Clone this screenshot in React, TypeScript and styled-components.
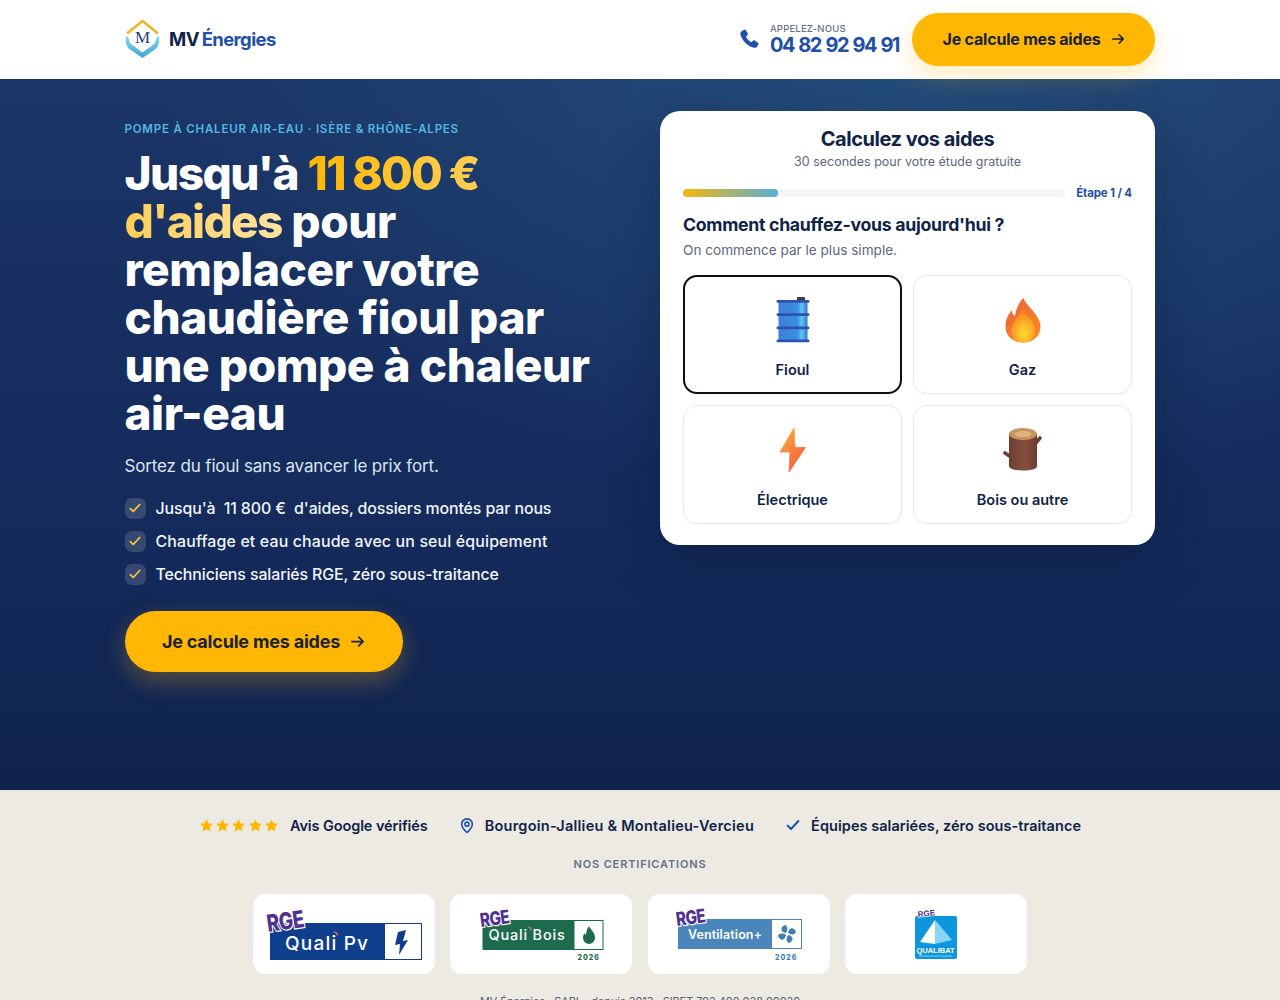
import React from "react";
import styled, { createGlobalStyle } from "styled-components";

const Global = createGlobalStyle`
  html, body { margin: 0; padding: 0; background: #edeae3; }
  * { box-sizing: border-box; }
  body { font-family: Inter, "Noto Sans", sans-serif; color: #0f2348; }
`;

const Page = styled.div`
  width: 1280px;
  height: 1000px;
  overflow: hidden;
`;
const Header = styled.header`
  height: 79px;
  background: #fff;
  padding: 0 125px 1px;
  display: flex;
  align-items: center;
  justify-content: space-between;
`;
const Logo = styled.div`
  display: flex;
  align-items: center;
  gap: 8px;
`;
const LogoText = styled.div`
  font-size: 18.5px;
  font-weight: 700;
  letter-spacing: -0.6px;
  word-spacing: -1px;
  color: #0f2348;
  span { color: #1f4fa8; }
`;
const HeaderRight = styled.div`
  display: flex;
  align-items: center;
  gap: 13px;
`;
const PhoneBlock = styled.div`
  display: flex;
  align-items: center;
  gap: 10px;
`;
const PhoneText = styled.div`
  display: flex;
  flex-direction: column;
  padding-top: 1px;
`;
const PhoneLabel = styled.span`
  font-size: 9.5px;
  font-weight: 500;
  color: #64708a;
  letter-spacing: 0.2px;
  line-height: 11px;
`;
const PhoneNumber = styled.span`
  font-size: 20px;
  font-weight: 700;
  color: #1f4fa8;
  line-height: 22px;
  letter-spacing: -1.5px;
  word-spacing: 1.2px;
`;
const Cta = styled.div<{ $big?: boolean }>`
  display: inline-flex;
  align-items: center;
  justify-content: center;
  gap: 10px;
  width: ${(p) => (p.$big ? "278px" : "243px")};
  height: ${(p) => (p.$big ? "61px" : "53px")};
  border-radius: 999px;
  background: #ffb703;
  color: #1a2238;
  font-weight: 700;
  font-size: ${(p) => (p.$big ? "18px" : "16px")};
  letter-spacing: -0.2px;
  box-shadow: 0 10px 24px rgba(255, 183, 3, ${(p) => (p.$big ? "0.28" : "0.25")});
`;
const Hero = styled.section`
  height: 711px;
  padding: 32px 125px 0 124.5px;
  background:
    radial-gradient(ellipse 760px 420px at 72% 0%, rgba(44, 96, 140, 0.55), rgba(20, 50, 100, 0) 100%),
    linear-gradient(180deg, #1a3566 0%, #142b5c 60%, #10234f 100%);
  display: grid;
  grid-template-columns: 500px 495px;
  justify-content: space-between;
  align-items: start;
  color: #fff;
`;
const HeroLeft = styled.div`
  padding-top: 11px;
`;
const Eyebrow = styled.div`
  font-size: 11.5px;
  font-weight: 600;
  letter-spacing: 0.8px;
  color: #55b6e3;
  line-height: 14px;
`;
const Title = styled.h1`
  margin: 13px 0 0;
  width: 490px;
  font-size: 46px;
  font-weight: 800;
  line-height: 48px;
  letter-spacing: -0.45px;
  color: #fff;
  em {
    font-style: normal;
    letter-spacing: -1.7px;
    word-spacing: -1px;
    color: transparent;
    background: linear-gradient(90deg, #ffb703, #ffe3a0);
    -webkit-background-clip: text;
    background-clip: text;
  }
`;
const TitleLead = styled.span`
  letter-spacing: -1.6px;
`;
const Lead = styled.p`
  margin: 16px 0 0;
  font-size: 17px;
  line-height: 26px;
  color: #dde5f0;
  letter-spacing: -0.15px;
`;
const Checks = styled.ul`
  list-style: none;
  margin: 18px 0 0;
  padding: 0;
  display: flex;
  flex-direction: column;
  gap: 11px;
`;
const CheckRow = styled.li<{ $ls: number }>`
  display: flex;
  align-items: center;
  gap: 10px;
  height: 22px;
  font-size: 15.9px;
  font-weight: 500;
  color: #f2f5fa;
  letter-spacing: ${(p) => p.$ls}px;
  white-space: pre;
`;
const CheckBox = styled.span`
  width: 21px;
  height: 21px;
  border-radius: 7px;
  background: rgba(255, 255, 255, 0.15);
  display: flex;
  align-items: center;
  justify-content: center;
  flex: none;
`;
const HeroCta = styled.div`
  margin-top: 26px;
`;
const Card = styled.div`
  background: #fff;
  border-radius: 20px;
  height: 434px;
  padding: 16px 23px 0;
  box-shadow: 0 20px 50px rgba(5, 15, 45, 0.3);
  color: #0f2348;
`;
const CardTitle = styled.h2`
  margin: 0;
  text-align: center;
  font-size: 20px;
  font-weight: 700;
  line-height: 24px;
  letter-spacing: -0.45px;
`;
const CardSub = styled.div`
  margin-top: 2px;
  text-align: center;
  font-size: 12.5px;
  line-height: 18px;
  color: #5d6880;
`;
const ProgressRow = styled.div`
  margin-top: 15px;
  display: flex;
  align-items: center;
  gap: 11px;
`;
const Track = styled.div`
  flex: 1;
  height: 8px;
  border-radius: 4px;
  background: #f2f4f6;
`;
const Fill = styled.div`
  width: 24.8%;
  height: 100%;
  border-radius: 4px;
  background: linear-gradient(90deg, #f6b60d, #55b0d8);
`;
const Step = styled.span`
  font-size: 11.5px;
  font-weight: 700;
  color: #1f4fa8;
  letter-spacing: -0.15px;
`;
const Question = styled.div`
  margin-top: 13px;
  font-size: 17.7px;
  font-weight: 700;
  line-height: 24px;
  letter-spacing: -0.3px;
`;
const Hint = styled.div`
  margin-top: 3px;
  font-size: 13.6px;
  line-height: 20px;
  color: #5d6880;
`;
const Options = styled.div`
  margin-top: 15px;
  display: grid;
  grid-template-columns: 1fr 1fr;
  gap: 11px;
`;
const Option = styled.div<{ $on?: boolean }>`
  height: 119px;
  border-radius: 14px;
  border: ${(p) => (p.$on ? "2px solid #0c0f16" : "1px solid #e6e8ec")};
  display: flex;
  flex-direction: column;
  align-items: center;
  padding-top: ${(p) => (p.$on ? "20px" : "21px")};
  font-size: 14.5px;
  font-weight: 600;
  color: #0f2348;
  box-shadow: 0 1px 3px rgba(15, 35, 72, 0.04);
`;
const OptionIcon = styled.div`
  height: 48px;
  display: flex;
  align-items: flex-start;
  justify-content: center;
`;
const OptionLabel = styled.span`
  margin-top: 14px;
  line-height: 22px;
`;
const Trust = styled.section`
  background: #edeae3;
  padding-top: 25px;
`;
const TrustRow = styled.div`
  display: flex;
  justify-content: center;
  align-items: center;
  gap: 31px;
  height: 20px;
`;
const TrustItem = styled.div<{ $ls: number }>`
  display: flex;
  align-items: center;
  gap: 10px;
  font-size: 14.5px;
  font-weight: 600;
  color: #0f2348;
  letter-spacing: ${(p) => p.$ls}px;
`;
const Stars = styled.span`
  display: flex;
  gap: 1.25px;
  margin-right: 1px;
`;
const CertLabel = styled.div`
  margin-top: 22px;
  text-align: center;
  font-size: 11px;
  font-weight: 600;
  letter-spacing: 0.85px;
  color: #64708a;
  line-height: 14px;
`;
const Certs = styled.div`
  margin-top: 23px;
  display: flex;
  justify-content: center;
  gap: 15.5px;
`;
const Cert = styled.div`
  width: 182px;
  height: 80px;
  border-radius: 12px;
  background: #fff;
  display: flex;
  align-items: center;
  justify-content: center;
`;
const Legal = styled.div`
  margin-top: 20px;
  text-align: center;
  font-size: 10.9px;
  color: #55606f;
  line-height: 14px;
`;

const Arrow = ({ size }: { size: number }) => (
  <svg width={size} height={size} viewBox="0 0 24 24" fill="none" stroke="currentColor" strokeWidth="2.800" strokeLinecap="round" strokeLinejoin="round">
    <path d="M3 12h18M14 5l7 7-7 7" />
  </svg>
);
const Tick = ({ color = "#ffc53a", size = 14 }: { color?: string; size?: number }) => (
  <svg width={size} height={size} viewBox="0 0 24 24" fill="none" stroke={color} strokeWidth="3" strokeLinecap="round" strokeLinejoin="round">
    <path d="M4 13l5 5L20 6" />
  </svg>
);
const Star = () => (
  <svg width="15" height="15" viewBox="0 0 24 24" fill="#ffb703">
    <path d="M12 1.800l3.100 6.600 7.200.9-5.300 5 1.400 7.200L12 18l-6.400 3.500L7 14.300l-5.300-5 7.200-.9z" />
  </svg>
);
const Phone = () => (
  <svg width="22" height="22" viewBox="0 0 24 24" fill="#1f4fa8">
    <path d="M6.600 1.800c.6-.4 1.400-.2 1.800.4l2.300 3.800c.3.6.2 1.300-.3 1.700L8.600 9.200c1 2.400 3.400 5.200 6.200 6.400l1.500-1.700c.5-.5 1.200-.6 1.800-.2l3.700 2.400c.6.400.8 1.200.4 1.800l-1.200 2.200c-.7 1.100-2 1.800-3.300 1.500C10.500 20.300 3.900 13.200 2.600 6.900c-.3-1.300.3-2.600 1.400-3.400z" />
  </svg>
);
const Pin = () => (
  <svg width="16" height="17" viewBox="0 0 24 24" fill="none" stroke="#1f4fa8" strokeWidth="2.400">
    <path d="M12 22.500c-4-3.600-8-8-8-12.500a8 8 0 0 1 16 0c0 4.500-4 8.900-8 12.500z" />
    <circle cx="12" cy="10" r="3" />
  </svg>
);

const LogoMark = () => (
  <svg width="36" height="40" viewBox="0 0 36 40">
    <defs>
      <linearGradient id="lgHand" x1="0" y1="0" x2="0" y2="1">
        <stop offset="0" stopColor="#8ad6ea" />
        <stop offset="1" stopColor="#3fa4d4" />
      </linearGradient>
    </defs>
    <path d="M2 14.500L17.500 2 33 14.500" fill="none" stroke="#f3b52e" strokeWidth="2.800" strokeLinejoin="round" />
    <path d="M1 17c1.500 0 2.500 1 3 4 .5 2.500 2 4 4 5.500l9.500 7 9.500-7c2-1.500 3.500-3 4-5.500.5-3 1.500-4 3-4 1 6-.5 11-4 13.500L17.500 39 5 30.500C1.500 28 0 23 1 17z" fill="url(#lgHand)" />
    <text x="17.500" y="24" textAnchor="middle" fontFamily="'Liberation Serif', serif" fontSize="17" fill="#1e3f7d">M</text>
  </svg>
);

const Barrel = () => (
  <svg width="34" height="47" viewBox="0 0 34 47">
    <defs>
      <linearGradient id="brl" x1="0" x2="1" y1="0" y2="0">
        <stop offset="0" stopColor="#3f7fd6" />
        <stop offset="0.65" stopColor="#3a8fe0" />
        <stop offset="0.8" stopColor="#5cc6f2" />
        <stop offset="1" stopColor="#3573c8" />
      </linearGradient>
    </defs>
    <rect x="21" y="0" width="8" height="4" rx="1" fill="#333b50" />
    <rect x="2.500" y="4" width="29" height="41" fill="url(#brl)" />
    <rect x="0.500" y="3" width="33" height="2.800" rx="1.400" fill="#2f50ad" />
    <rect x="0.500" y="16.200" width="33" height="2.800" rx="1.400" fill="#2f50ad" />
    <rect x="0.500" y="29.500" width="33" height="2.800" rx="1.400" fill="#2f50ad" />
    <rect x="0.500" y="42.500" width="33" height="2.800" rx="1.400" fill="#2f50ad" />
  </svg>
);
const Flame = () => (
  <svg width="36" height="46" viewBox="0 0 36 46">
    <defs>
      <linearGradient id="fl1" x1="0" x2="1" y1="0" y2="1">
        <stop offset="0" stopColor="#e8633c" />
        <stop offset="1" stopColor="#ff8a1f" />
      </linearGradient>
      <radialGradient id="fl2" cx="0.55" cy="0.72" r="0.7">
        <stop offset="0" stopColor="#ffdc33" />
        <stop offset="1" stopColor="#ff7d1d" />
      </radialGradient>
    </defs>
    <path d="M18 45.500C8 45.500 .5 39 .5 29.500 .5 23 3 17.500 7 13c0 3 1 5 3 6C11 12 14 5 18.500 1c2 6 8 10 12.500 17 3 4 4.500 8 4.500 11.500 0 10-7.500 16-17.500 16z" fill="url(#fl1)" />
    <path d="M19 45.500c-8 0-13-5-13-12 0-7 6-11 12-21 3 6 12 11 12 21 0 7-4 12-11 12z" fill="url(#fl2)" />
  </svg>
);
const Bolt = () => (
  <svg width="27" height="46" viewBox="0 0 27 46">
    <defs>
      <linearGradient id="blt" x1="0.2" x2="0.8" y1="0" y2="1">
        <stop offset="0" stopColor="#ffa93a" />
        <stop offset="1" stopColor="#ee5a3f" />
      </linearGradient>
    </defs>
    <path d="M15 1L1 25h10l-1 20L26.500 20.500H16z" fill="url(#blt)" stroke="url(#blt)" strokeWidth="0.800" strokeLinejoin="round" />
  </svg>
);
const Log = () => (
  <svg width="40" height="45" viewBox="0 0 40 45">
    <defs>
      <linearGradient id="lg" x1="0" x2="1" y1="0" y2="0">
        <stop offset="0" stopColor="#6d3f31" />
        <stop offset="0.6" stopColor="#86503e" />
        <stop offset="1" stopColor="#6a3c2f" />
      </linearGradient>
    </defs>
    <path d="M31 18l6-7" stroke="#6a4038" strokeWidth="3.600" strokeLinecap="round" />
    <path d="M8 30L2 26" stroke="#6a4038" strokeWidth="3.600" strokeLinecap="round" />
    <path d="M6 7v32c0 3 6 4.500 14 4.500S34 42 34 39V7z" fill="url(#lg)" />
    <ellipse cx="20" cy="7" rx="14" ry="6" fill="#c6935a" />
    <ellipse cx="20" cy="7" rx="8.500" ry="3.200" fill="#dcb37a" />
  </svg>
);

const RgeTag = ({ size, x, y }: { size: number; x: number; y: number }) => (
  <g transform={`translate(${x} ${y}) rotate(-8) scale(0.95 1.18)`}>
    <text x="0" y="0" fontFamily="Inter, sans-serif" fontWeight="800" fontSize={size} fill="#51318f" stroke="#fff" strokeWidth="2" paintOrder="stroke" letterSpacing="-0.5">RGE</text>
  </g>
);
const Spark = ({ d }: { d: string }) => <path d={d} fill="none" stroke="#e8775f" strokeWidth="1.200" strokeLinecap="round" />;

const CertPv = () => (
  <svg width="160" height="56" viewBox="0 0 160 56">
    <rect x="6" y="17" width="152" height="37" fill="#0f3f8c" />
    <rect x="121" y="18" width="36" height="35" fill="#fff" />
    <text x="21" y="44" fontFamily="Inter, sans-serif" fontSize="19" fontWeight="500" fill="#fff" letterSpacing="1.200">Quali Pv</text>
    <Spark d="M70 26c2 0 3 1 3.500 3" />
    <path d="M142 24l-8 2-3 13 5-1-1 11 9-15-5 1z" fill="#0f3f8c" />
    <RgeTag size={20} x={4} y={26} />
  </svg>
);
const CertBois = () => (
  <svg width="130" height="56" viewBox="0 0 130 56">
    <rect x="6.500" y="14" width="121" height="30" fill="#1c6b4d" />
    <rect x="98.500" y="15" width="28" height="28" fill="#fff" />
    <text x="12.500" y="34" fontFamily="Inter, sans-serif" fontSize="14.500" fontWeight="500" fill="#fff" letterSpacing="0.800">Quali Bois</text>
    <Spark d="M52 21c2 0 3 1 3 3" />
    <path d="M113 20c1 3 6 6 6 12a6 6 0 0 1-12 0c0-3 1-4 2-5 0 2 1 2 1 2 0-3 1-6 3-9z" fill="#1c6b4d" />
    <text x="101.500" y="54" fontFamily="Inter, sans-serif" fontSize="7" fontWeight="800" fill="#1c6b4d" letterSpacing="1">2026</text>
    <RgeTag size={16} x={5} y={21} />
  </svg>
);
const CertVent = () => (
  <svg width="130" height="56" viewBox="0 0 130 56">
    <rect x="4" y="13" width="124" height="30" fill="#4a86bb" />
    <rect x="98" y="14" width="29" height="28" fill="#fff" />
    <text x="14" y="33" fontFamily="Inter, sans-serif" fontSize="12.500" fontWeight="600" fill="#fff" letterSpacing="0.100">Ventilation+</text>
    <g fill="#3f7fb3" transform="translate(113 28)">
      <path d="M-1-1C-7-2-7-7-2-9c3 1 3 5 1 8zM1-1C2-7 7-7 9-2 8 1 4 1 1-1zM1 1C7 2 7 7 2 9-1 8-1 4 1 1zM-1 1C-2 7-7 7-9 2-8-1-4-1-1 1z" />
    </g>
    <text x="101" y="54" fontFamily="Inter, sans-serif" fontSize="7" fontWeight="800" fill="#3f7fb3" letterSpacing="1">2026</text>
    <RgeTag size={16} x={3} y={20} />
  </svg>
);
const CertQualibat = () => (
  <svg width="46" height="52" viewBox="0 0 46 52">
    <rect x="2" y="8" width="42" height="43" rx="2" fill="#0d96de" />
    <path d="M22 12L7 34l15 2z" fill="#fff" />
    <path d="M22 12l17 20-17 4z" fill="#86d6f6" />
    <text x="22.500" y="45" textAnchor="middle" fontFamily="'Liberation Sans', sans-serif" fontSize="7.500" fontWeight="700" fill="#fff">QUALIBAT</text>
    <rect x="6" y="47.500" width="33" height="1.200" fill="#6cc4ee" />
    <g transform="translate(5 9) rotate(-6)">
      <text x="0" y="0" fontFamily="'Liberation Sans', sans-serif" fontWeight="700" fontSize="8" fill="#51318f" stroke="#fff" strokeWidth="1.400" paintOrder="stroke">RGE</text>
    </g>
  </svg>
);

const options = [
  { label: "Fioul", icon: <Barrel />, on: true },
  { label: "Gaz", icon: <Flame /> },
  { label: "Électrique", icon: <Bolt /> },
  { label: "Bois ou autre", icon: <Log /> },
];
const checks = [
  { text: "Jusqu'à  11 800 €  d'aides, dossiers montés par nous", ls: -0.1 },
  { text: "Chauffage et eau chaude avec un seul équipement", ls: 0.15 },
  { text: "Techniciens salariés RGE, zéro sous-traitance", ls: -0.1 },
];

export default function App() {
  return (
    <Page>
      <Global />
      <Header>
        <Logo>
          <LogoMark />
          <LogoText>
            MV <span>Énergies</span>
          </LogoText>
        </Logo>
        <HeaderRight>
          <PhoneBlock>
            <Phone />
            <PhoneText>
              <PhoneLabel>APPELEZ-NOUS</PhoneLabel>
              <PhoneNumber>04 82 92 94 91</PhoneNumber>
            </PhoneText>
          </PhoneBlock>
          <Cta>
            Je calcule mes aides <Arrow size={14} />
          </Cta>
        </HeaderRight>
      </Header>
      <Hero>
        <HeroLeft>
          <Eyebrow>POMPE À CHALEUR AIR-EAU · ISÈRE &amp; RHÔNE-ALPES</Eyebrow>
          <Title>
            <TitleLead>Jusqu'à</TitleLead> <em>11 800 € d'aides</em> pour remplacer votre chaudière fioul par une pompe à chaleur air-eau
          </Title>
          <Lead>Sortez du fioul sans avancer le prix fort.</Lead>
          <Checks>
            {checks.map((c) => (
              <CheckRow key={c.text} $ls={c.ls}>
                <CheckBox>
                  <Tick />
                </CheckBox>
                {c.text}
              </CheckRow>
            ))}
          </Checks>
          <HeroCta>
            <Cta $big>
              Je calcule mes aides <Arrow size={15} />
            </Cta>
          </HeroCta>
        </HeroLeft>
        <Card>
          <CardTitle>Calculez vos aides</CardTitle>
          <CardSub>30 secondes pour votre étude gratuite</CardSub>
          <ProgressRow>
            <Track>
              <Fill />
            </Track>
            <Step>Étape 1 / 4</Step>
          </ProgressRow>
          <Question>Comment chauffez-vous aujourd'hui ?</Question>
          <Hint>On commence par le plus simple.</Hint>
          <Options>
            {options.map((o) => (
              <Option key={o.label} $on={o.on}>
                <OptionIcon>{o.icon}</OptionIcon>
                <OptionLabel>{o.label}</OptionLabel>
              </Option>
            ))}
          </Options>
        </Card>
      </Hero>
      <Trust>
        <TrustRow>
          <TrustItem $ls={-0.1}>
            <Stars>
              <Star />
              <Star />
              <Star />
              <Star />
              <Star />
            </Stars>
            Avis Google vérifiés
          </TrustItem>
          <TrustItem $ls={0.25}>
            <Pin />
            Bourgoin-Jallieu &amp; Montalieu-Vercieu
          </TrustItem>
          <TrustItem $ls={0.05}>
            <Tick color="#1f4fa8" size={16} />
            Équipes salariées, zéro sous-traitance
          </TrustItem>
        </TrustRow>
        <CertLabel>NOS CERTIFICATIONS</CertLabel>
        <Certs>
          <Cert>
            <CertPv />
          </Cert>
          <Cert>
            <CertBois />
          </Cert>
          <Cert>
            <CertVent />
          </Cert>
          <Cert>
            <CertQualibat />
          </Cert>
        </Certs>
        <Legal>MV Énergies · SARL · depuis 2013 · SIRET 792 400 028 00020</Legal>
      </Trust>
    </Page>
  );
}
